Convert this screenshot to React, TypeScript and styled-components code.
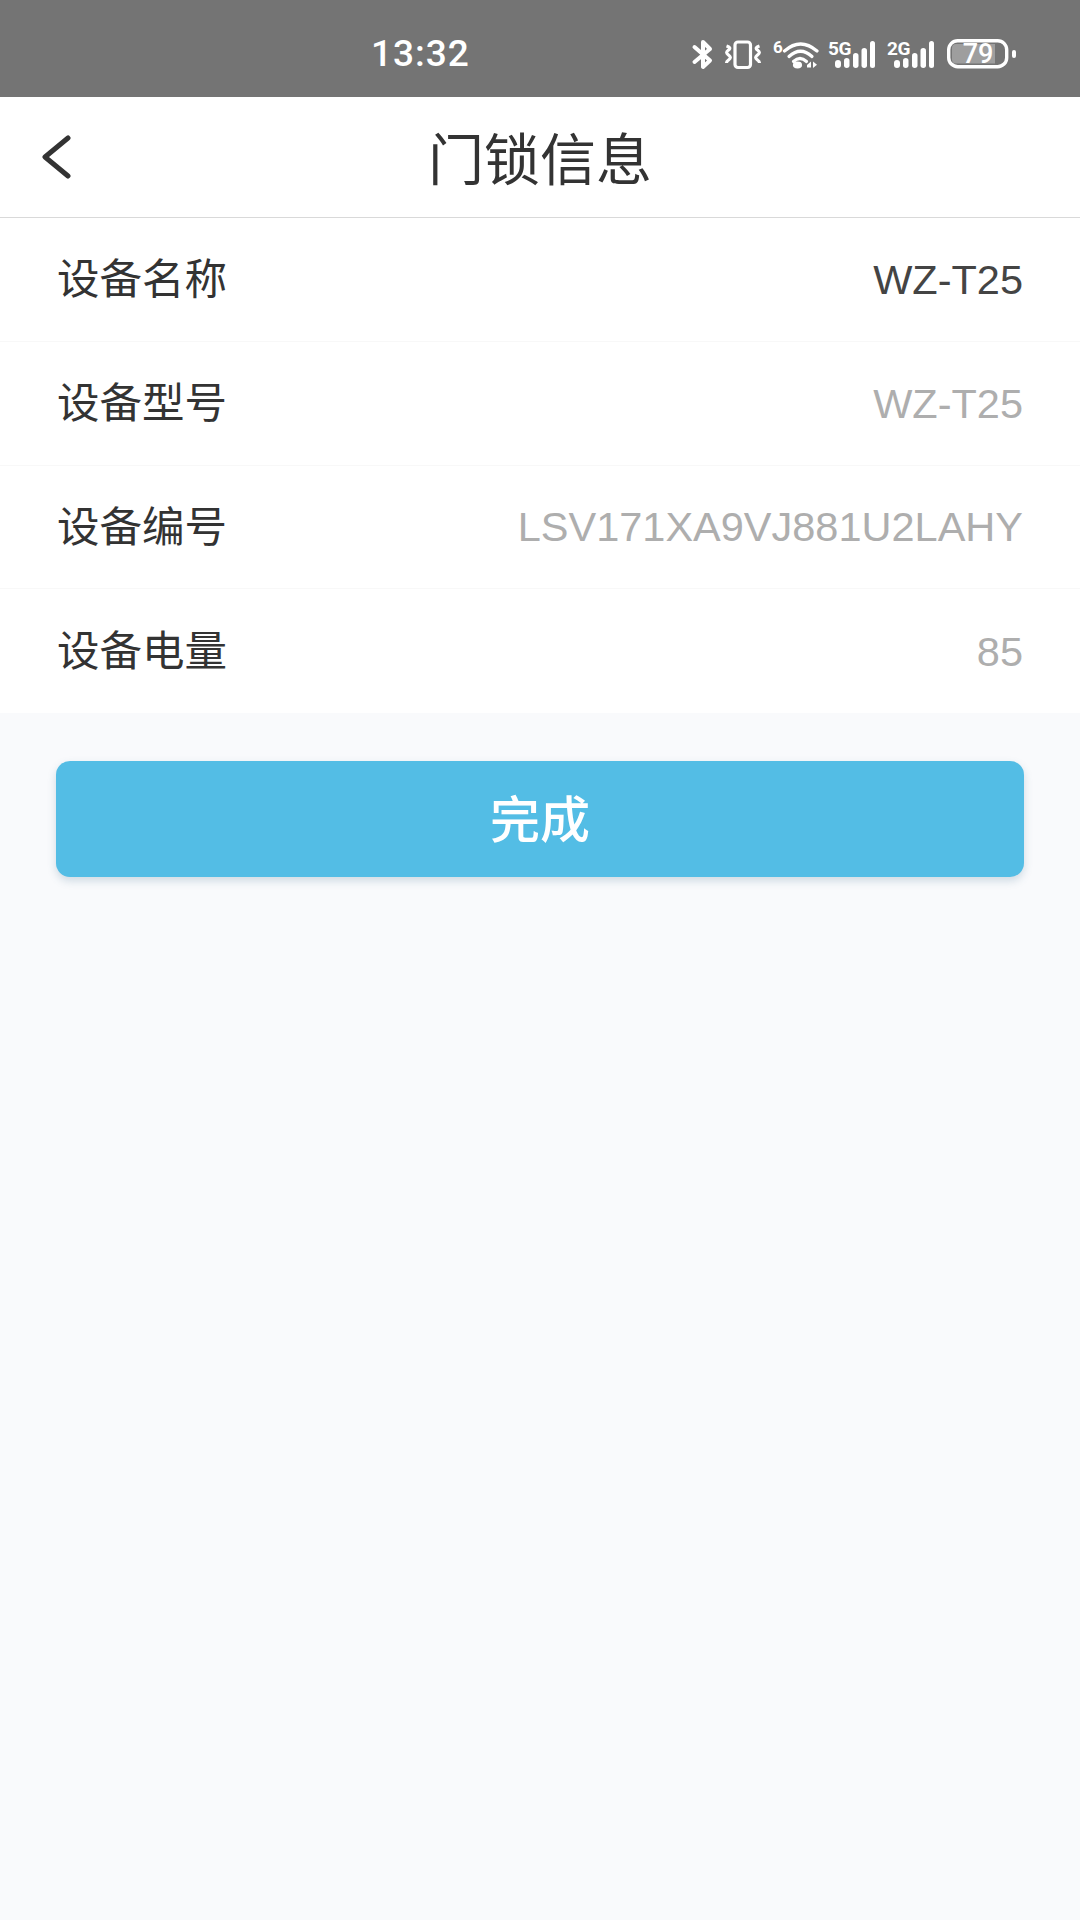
import * as React from "react";
import styled, { createGlobalStyle } from "styled-components";

const GlobalStyle = createGlobalStyle`
  html, body {
    margin: 0;
    padding: 0;
    background: #f9fafc;
  }
  body {
    font-family: Roboto, "Noto Sans CJK SC", sans-serif;
  }
`;

const Page = styled.div`
  width: 1080px;
  height: 1920px;
  background: #f9fafc;
  overflow: hidden;
`;

const StatusBar = styled.div`
  height: 97px;
  background: #747474;
  display: flex;
  align-items: center;
  padding: 10px 64px 0 371px;
  box-sizing: border-box;
  color: #fff;
`;

const Clock = styled.div`
  font-family: Roboto, sans-serif;
  font-size: 37px;
  font-weight: 500;
  line-height: 40px;
  letter-spacing: 1px;
`;

const StatusIcons = styled.div`
  margin-left: auto;
  display: flex;
  align-items: center;
  height: 36px;
`;

const StatusIcon = styled.svg<{ $gap?: number }>`
  display: block;
  flex: none;
  margin-left: ${(p) => p.$gap ?? 0}px;
  fill: #fff;
`;

const NavBar = styled.div`
  height: 121px;
  background: #fff;
  border-bottom: 1px solid #d9d9d9;
  box-sizing: border-box;
  display: flex;
  align-items: center;
  justify-content: center;
  position: relative;
`;

const BackButton = styled.svg`
  position: absolute;
  left: 40px;
  top: 38px;
`;

const Title = styled.h1`
  margin: 0 0 2px;
  font-family: "Noto Sans CJK SC", sans-serif;
  font-size: 56px;
  font-weight: 400;
  line-height: 64px;
  color: #333;
`;

const List = styled.div`
  background: #fff;
`;

const Row = styled.div`
  height: 123.75px;
  box-sizing: border-box;
  padding: 0 57px 0 57px;
  display: flex;
  align-items: center;
  justify-content: space-between;
  border-bottom: 1px solid #f8f8f8;

  &:last-child {
    border-bottom: none;
  }
`;

const Label = styled.span`
  font-family: "Noto Sans CJK SC", sans-serif;
  font-size: 42.5px;
  line-height: 50px;
  padding-bottom: 6px;
  color: #333;
`;

const Value = styled.span<{ $muted?: boolean }>`
  font-family: "Liberation Sans", sans-serif;
  font-size: 41.5px;
  line-height: 48px;
  padding-top: 1px;
  color: ${(p) => (p.$muted ? "#aeaeae" : "#444")};
`;

const Footer = styled.div`
  padding: 48px 56px 0;
`;

const DoneButton = styled.button`
  display: block;
  width: 100%;
  height: 116px;
  padding: 0 0 6px;
  border: none;
  border-radius: 14px;
  background: #53bde5;
  box-shadow: 0 4px 8px rgba(60, 110, 140, 0.22);
  color: #fff;
  font-family: "Noto Sans CJK SC", sans-serif;
  font-size: 50px;
  font-weight: 500;
`;

const rows = [
  { label: "设备名称", value: "WZ-T25", muted: false },
  { label: "设备型号", value: "WZ-T25", muted: true },
  { label: "设备编号", value: "LSV171XA9VJ881U2LAHY", muted: true },
  { label: "设备电量", value: "85", muted: true },
];

const SIGNAL_BARS = [
  { x: 7, top: 24, w: 6 },
  { x: 16, top: 22, w: 5.5 },
  { x: 25, top: 17, w: 5.5 },
  { x: 33.5, top: 12, w: 5.5 },
  { x: 42, top: 5, w: 5 },
];

function Signal({ tag, gap }: { tag: string; gap: number }) {
  return (
    <StatusIcon $gap={gap} width="47" height="36" viewBox="0 0 47 36">
      <text x="0" y="19" fontFamily="Roboto, sans-serif" fontSize="19" fontWeight="700" letterSpacing="-0.5">
        {tag}
      </text>
      {SIGNAL_BARS.map((b) => (
        <rect key={b.x} x={b.x} y={b.top} width={b.w} height={32 - b.top} rx={b.w / 2} />
      ))}
    </StatusIcon>
  );
}

export default function App() {
  return (
    <Page>
      <GlobalStyle />
      <StatusBar>
        <Clock>13:32</Clock>
        <StatusIcons>
          {/* bluetooth */}
          <StatusIcon width="22" height="36" viewBox="0 0 22 36">
            <path
              d="M3.5 11 L19 24.5 L12 31 L12 6 L19 13 L3.5 26"
              fill="none"
              stroke="#fff"
              strokeWidth="4"
              strokeLinejoin="round"
              strokeLinecap="round"
            />
          </StatusIcon>
          {/* vibrate */}
          <StatusIcon $gap={10} width="40" height="36" viewBox="0 0 40 36">
            <rect x="12" y="6" width="15.5" height="25.5" rx="3" fill="none" stroke="#fff" strokeWidth="3.2" />
            <path
              d="M3.5 10 C6.5 11 8 12 5.5 14 C3 16 3 17 5.5 19 C8 21 8 22 5.5 24 C4 25 3.5 26 3.5 27"
              fill="none"
              stroke="#fff"
              strokeWidth="3.2"
            />
            <path
              d="M36.5 10 C33.5 11 32 12 34.5 14 C37 16 37 17 34.5 19 C32 21 32 22 34.5 24 C36 25 36.5 26 36.5 27"
              fill="none"
              stroke="#fff"
              strokeWidth="3.2"
            />
          </StatusIcon>
          {/* wifi 6 */}
          <StatusIcon $gap={10} width="46" height="36" viewBox="0 0 46 36">
            <text x="0" y="17" fontFamily="Roboto, sans-serif" fontSize="17" fontWeight="700">
              6
            </text>
            <g fill="none" stroke="#fff" strokeWidth="3.2" strokeLinecap="round">
              <path d="M11.5 15 Q27.5 1 44 15" />
              <path d="M16 20.5 Q27.5 10 39 20.5" />
              <path d="M20.5 25.5 Q27 19.5 33.5 25.5" />
            </g>
            <ellipse cx="24.5" cy="29" rx="4.6" ry="3.4" />
            <path d="M34 29 L38 25.5 L38 31.5 L34 31.5 Z M40 25.5 L40 32 L44 28.7 Z" />
          </StatusIcon>
          <Signal tag="5G" gap={9} />
          <Signal tag="2G" gap={12} />
          {/* battery */}
          <StatusIcon $gap={13} width="69" height="36" viewBox="0 0 69 36">
            <rect x="1.7" y="4.7" width="58" height="26" rx="9" fill="none" stroke="#fff" strokeWidth="3.4" />
            <path d="M9 8 H48 V27.5 H9 Q5 27.5 5 23.5 V12 Q5 8 9 8 Z" fillOpacity="0.3" />
            <rect x="65" y="14" width="4" height="8" rx="2" />
            <text x="31" y="27" textAnchor="middle" fontFamily="Roboto, sans-serif" fontSize="27" fontWeight="500">
              79
            </text>
          </StatusIcon>
        </StatusIcons>
      </StatusBar>
      <NavBar>
        <BackButton width="34" height="44" viewBox="0 0 34 44">
          <path
            d="M28 3 L5 22 L28 41"
            fill="none"
            stroke="#333"
            strokeWidth="5"
            strokeLinecap="round"
            strokeLinejoin="round"
          />
        </BackButton>
        <Title>门锁信息</Title>
      </NavBar>
      <List>
        {rows.map((row) => (
          <Row key={row.label}>
            <Label>{row.label}</Label>
            <Value $muted={row.muted}>{row.value}</Value>
          </Row>
        ))}
      </List>
      <Footer>
        <DoneButton>完成</DoneButton>
      </Footer>
    </Page>
  );
}
